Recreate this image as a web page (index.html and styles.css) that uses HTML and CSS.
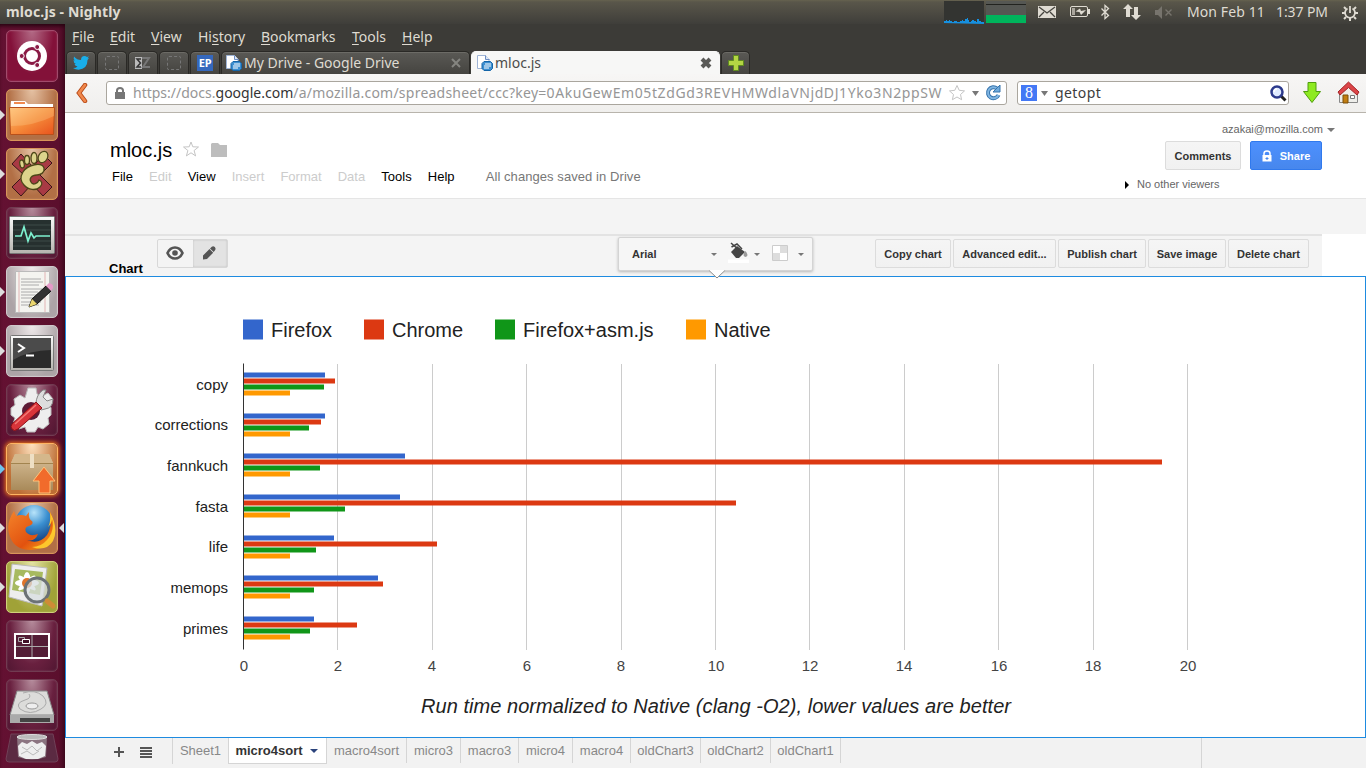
FILE: index.html
```html
<!DOCTYPE html>
<html lang="en">
<head>
<meta charset="utf-8">
<title>mloc.js</title>
<link rel="stylesheet" href="styles.css">
</head>
<body>
<svg width="0" height="0" class="defs">
  <defs>
    <linearGradient id="orange" x1="0" y1="0" x2="1" y2="1"><stop offset="0" stop-color="#ffc078"/><stop offset=".5" stop-color="#f58a3a"/><stop offset="1" stop-color="#e8521c"/></linearGradient>
    <linearGradient id="metal" x1="0" y1="0" x2="0" y2="1"><stop offset="0" stop-color="#fafafa"/><stop offset="1" stop-color="#b5b3ae"/></linearGradient>
    <linearGradient id="box" x1="0" y1="0" x2="0" y2="1"><stop offset="0" stop-color="#d9c09a"/><stop offset="1" stop-color="#a98a5a"/></linearGradient>
    <radialGradient id="globe" cx=".5" cy=".2" r=".8"><stop offset="0" stop-color="#b8e4fa"/><stop offset=".45" stop-color="#3a8fd0"/><stop offset="1" stop-color="#123c7c"/></radialGradient>
    <linearGradient id="fox" x1="0" y1="0" x2="1" y2="1"><stop offset="0" stop-color="#f4832a"/><stop offset=".6" stop-color="#e2520f"/><stop offset="1" stop-color="#f9b01e"/></linearGradient>
    <symbol id="doc" viewBox="0 0 16 16"><path d="M.5.500h8l3.500 4v9H.5z" fill="#fff" stroke="#9fb4d6"/><path d="M8.500.500v4h4" fill="#dce6f5" stroke="#6f8fc4"/><path d="M7 6.500h6.500l2 2v5l-2 2H7l-2-2v-5z" fill="#3c8fd0" stroke="#1465a8"/><path d="M8 9h6M7 11h7M7 13h5" stroke="#fff"/></symbol>
  </defs>
</svg>
<header class="panel">
  <div class="panel-title">mloc.js - Nightly</div>
  <svg class="tray" width="240" height="24" viewBox="940 0 240 24">
    <path fill="#333431" d="M944 1h40v22h-40z"/>
    <path fill="#1690e0" d="M944 23v-2h2v-1h1v1h2v-1h1v1h2v1h2v-1h3v1h3v-1h2v-1h1v1h2v-2h2v-1h1v2h1v2h2v-1h1v-1h2v1h2v1h1v-3h2v2h2v1h3v2z"/>
    <path fill="#555753" d="M986 1h40v22h-40z"/><path fill="#22231f" d="M986 4h40v1h-40z"/><path fill="#00b45c" d="M986 15h40v8h-40z"/>
    <rect x="1038" y="6" width="18" height="12" fill="#dfdbd2"/><path d="M1039 7l8 6 8-6M1039 17l5-5M1055 17l-5-5" fill="none" stroke="#45443e" stroke-width="1.300"/>
    <rect x="1070.500" y="6.500" width="17" height="10" rx="1.500" fill="none" stroke="#dfdbd2"/><path d="M1088 9h2v5h-2z" fill="#dfdbd2"/><path d="M1072 8h3v7h-3z" fill="#aaa69d"/><path d="M1075.500 11.500l4.500-3 1 2.500 5-1-5 5-1.500-3z" fill="#dfdbd2"/>
    <path d="M1101.500 8.500l7 7-3.500 3v-13l3.500 3-7 7" fill="none" stroke="#dfdbd2" stroke-width="1.300"/>
    <path d="M1128 4l5 5h-3v8h-4V9h-3zM1134 7h4v8h3l-5 5-5-5h3z" fill="#dfdbd2"/>
    <path d="M1155 10h3l4-4v13l-4-4h-3z" fill="#77746d"/><path d="M1165.500 9.500l6 6m0-6l-6 6" stroke="#77746d" stroke-width="1.400"/>
  </svg>
  <div class="clock"><span class="date">Mon Feb 11</span><span class="time">1:37 PM</span></div>
  <svg class="gear" width="18" height="18" viewBox="0 0 18 18"><path d="M6.500 4.500a5 5 0 1 0 5 0" fill="none" stroke="#dfdbd2" stroke-width="1.800"/><path d="M9 2v7" stroke="#dfdbd2" stroke-width="1.800"/><path d="M3 3l2 2M15 3l-2 2M1 9h3M14 9h3M3 15l2-2M15 15l-2-2M9 14v3" stroke="#dfdbd2" stroke-width="2"/></svg>
</header>
<div class="desktop">
<aside class="launcher">
  <div class="tile ubuntu"><svg viewBox="0 0 52 52"><circle cx="26" cy="26" r="15" fill="#fff"/><circle cx="26" cy="26" r="7.500" fill="none" stroke="#8a1a45" stroke-width="3"/><g fill="#8a1a45" stroke="#fff"><circle cx="15.700" cy="26" r="2.500"/><circle cx="31.200" cy="17" r="2.500"/><circle cx="31.200" cy="35" r="2.500"/></g></svg></div>
  <div class="tile copper run"><svg viewBox="0 0 52 52"><path d="M5 12h14l3 3h25v8H4z" fill="#fff"/><path d="M8 13h11v2H8z" fill="#f08a50"/><path d="M3.500 18.500h45l-1 27h-43z" fill="url(#orange)" stroke="#b8501a"/><path d="M4 19h44v8Q28 37 5 37z" fill="#ffe0a0" opacity=".25"/></svg></div>
  <div class="tile copper run"><svg viewBox="0 0 52 52"><path d="M6 16l9-10 12 13L37 6l9 9-12 12 12 12-9 9-11-12-11 12-9-9 12-12z" fill="#a83a44" stroke="#3a1518"/><g fill="#ddd48c" stroke="#4d4618" stroke-width="1.300"><path d="M17 24c5-8 19-10 21-4 1 5-4 7-7 7-6 0-8 4-6 7 2 4 7 1 8-2 3 1 4 4 1 7-4 4-12 3-16-2-4-4-4-8-1-13z"/><ellipse cx="16" cy="16" rx="2.200" ry="4" transform="rotate(-10 16 16)"/><ellipse cx="21" cy="12" rx="2.500" ry="4.500" /><ellipse cx="28" cy="10" rx="3" ry="5.500"/><ellipse cx="37" cy="9" rx="4.500" ry="6" transform="rotate(30 37 9)"/></g></svg></div>
  <div class="tile plum"><svg viewBox="0 0 52 52"><rect x="3.500" y="9.500" width="45" height="37" rx="1" fill="url(#metal)" stroke="#777"/><path d="M7 13h38v30H7z" fill="#26302f"/><path d="M7 18h38M7 23h38M7 34h38M7 39h38" stroke="#3d4a48"/><path d="M9 29h6l3-9 4 14 3-8 3 5 2-2h14" fill="none" stroke="#7df0cf" stroke-width="1.700"/></svg></div>
  <div class="tile silver run"><svg viewBox="0 0 52 52"><path d="M9.500 5.500h34v41h-34z" fill="#f4f4f0" stroke="#bbb"/><path d="M13 6v40M39 6v40" stroke="#e2b4b4"/><path d="M15 13h20M15 16h22M15 19h18M15 23h21M15 26h17M15 29h20M15 32h14M15 36h20M15 39h18" stroke="#999" stroke-width=".8"/><path d="M23 41l3-8 14-13 5 5-14 13z" fill="#333" stroke="#111"/><path d="M23 41l3-8 5 5z" fill="#ead66e"/><path d="M40 20l3-3q5 1 4 5l-2 3z" fill="#e59ac8"/></svg></div>
  <div class="tile silver run"><svg viewBox="0 0 52 52"><rect x="4.500" y="10.500" width="43" height="35" rx="1" fill="url(#metal)" stroke="#777"/><path d="M7 13h38v30H7z" fill="#2b2b2b"/><path d="M7 13h38v12Q24 25 7 35z" fill="#4b4b4b"/><path d="M12 19l6 4-6 4M20 30.500h8" fill="none" stroke="#fff" stroke-width="2"/></svg></div>
  <div class="tile plum"><svg viewBox="0 0 52 52"><path d="M22 4h8l1 6 5 2 6-3 5 6-4 5 2 4v7l-3 3 1 6-6 5-5-2-3 5h-8l-2-5-6 2-6-5 2-6-4-3v-7l4-3-1-6 6-4 5 3z" fill="#eee" stroke="#bbb"/><circle cx="25" cy="27" r="9" fill="#5c1a35"/><path d="M30 20q0-9 7-14l3 0-3 7 4 4 6-2q0 9-8 10l-4 1z" fill="#ddd" stroke="#888"/><path d="M6 40L30 18l6 6L12 45q-4 3-6 0-2-2 0-5z" fill="#d8343a" stroke="#8c1016"/><path d="M9 40L30 21" stroke="#f47a74" stroke-width="1.500"/></svg></div>
  <div class="tile updater run blue"><svg viewBox="0 0 52 52"><path d="M9 11h34l4 9v27H5V20z" fill="url(#box)"/><path d="M9 11h34l4 9H5z" fill="#d4b78b"/><path d="M5 20.500h42" stroke="#a2844f"/><path d="M24 11h4v14h-4z" fill="#eedfc4"/><path d="M38 24l11 14h-5v12H33V38h-6z" fill="#f16b2b" stroke="#ffc37a"/></svg></div>
  <div class="tile copper run active"><svg viewBox="0 0 52 52"><circle cx="28" cy="22" r="19" fill="url(#globe)"/><path d="M44 10q8 13 1 26-7 12-20 12Q9 48 4 35-1 22 8 9l2 5q5-2 10 0l3-4q-1 7 3 9 2 3-3 5-5 1-3 6 4 5 12 2-3 8-11 6 12 5 20-5 5-8 3-19z" fill="url(#fox)"/><path d="M44 10q1 10-2 15 4-4 4-8 3 12-5 21-6 7-15 7 14 5 21-6 6-12-3-29z" fill="#fdc72c"/></svg></div>
  <div class="tile olive run"><svg viewBox="0 0 52 52"><path d="M6 3l35 4-5 38-33-9z" fill="#eee" stroke="#bbb"/><path d="M9 8l28 3-3 23-28-5z" fill="#a7ba60"/><g fill="#fff"><ellipse cx="21" cy="22" rx="12" ry="4"/><ellipse cx="21" cy="22" rx="4" ry="11"/><ellipse cx="21" cy="22" rx="3" ry="11" transform="rotate(50 21 22)"/><ellipse cx="21" cy="22" rx="3" ry="11" transform="rotate(-50 21 22)"/></g><circle cx="21" cy="22" r="5" fill="#df742b"/><circle cx="31" cy="29" r="12" fill="#d7dde0" fill-opacity=".75" stroke="#6c7276" stroke-width="3"/><path d="M41 40l6 5" stroke="#cf8c36" stroke-width="5" stroke-linecap="round"/></svg></div>
  <div class="tile plum"><svg viewBox="0 0 52 52"><rect x="9" y="14" width="34" height="24" fill="#541d36" stroke="#fff" stroke-width="2"/><path d="M26 15v22M10 26.500h32" stroke="#aaa"/><path d="M12.500 17.500h6v4h-6z" fill="none" stroke="#aaa"/><path d="M16.500 19.500h7v4h-7z" fill="#421028" stroke="#fff"/></svg></div>
  <div class="tile plum"><svg viewBox="0 0 52 52"><path d="M11 12h30l7 24H4z" fill="#dcdcda" stroke="#888"/><path d="M4 36h44v8H4z" fill="#aaa"/><path d="M14 39h30v4H14z" fill="#444"/><path d="M17 14q12-4 20 3 7 8-2 13-11 7-21 0-5-6 5-9 7-2 4-6" fill="none" stroke="#aaa"/><ellipse cx="26" cy="27" rx="6" ry="3" fill="#eee" stroke="#999"/></svg></div>
  <div class="trash"><svg width="56" height="30" viewBox="0 0 56 30"><path d="M7 1h42l5 25q0 3-3 3H5q-3 0-3-3z" fill="#5b2a42" stroke="#704057"/><path d="M13 3h30l-1 21q-14 5-28 0z" fill="#8b7480"/><ellipse cx="28" cy="4" rx="15" ry="2.500" fill="#bbb" stroke="#ddd"/><path d="M14 13l4-4 5 2 5-3 5 3 5-2 4 4-1 10-7 3-12 0-7-3z" fill="#eee"/><path d="M18 14l5 3 5-4 5 5 5-4M17 21l6-3 6 4 6-4" fill="none" stroke="#bbb"/></svg></div>
</aside>
<main class="window">
  <nav class="menubar"><span><u>F</u>ile</span><span><u>E</u>dit</span><span><u>V</u>iew</span><span>Hi<u>s</u>tory</span><span><u>B</u>ookmarks</span><span><u>T</u>ools</span><span><u>H</u>elp</span></nav>
  <div class="tabs">
    <div class="tab app"><svg width="16" height="16" viewBox="0 0 16 16"><path d="M0 13q3 0 4.500-1.500Q2 11 1.500 9H3Q.5 8 .5 5l1.500.5Q0 3.500 1 1.500 4 5 8 5q0-4 3.500-4 1.500 0 2.500 1l2-.7-1.500 2L16 3l-1.500 2Q14.500 14 5.500 14.700 2.500 14.700 0 13z" fill="#19aeea"/></svg></div>
    <div class="tab app"><i class="blank"></i></div>
    <div class="tab app"><svg width="16" height="16" viewBox="0 0 16 16"><path d="M0 2h7v12H0z" fill="#bbb"/><path d="M6 4H2l3.500 4L2 12h4" fill="none" stroke="#333" stroke-width="1.500"/><path d="M7 3h7L8 12h7" fill="none" stroke="#777" stroke-width="2"/></svg></div>
    <div class="tab app"><i class="blank"></i></div>
    <div class="tab app"><b class="ep">EP</b></div>
    <div class="tab drive"><svg width="16" height="16"><use href="#doc"/></svg><span>My Drive - Google Drive</span><svg class="close" width="12" height="12" viewBox="0 0 12 12"><path d="M2 2l8 8m0-8l-8 8" stroke="#858580" stroke-width="2"/></svg></div>
    <div class="tab current"><svg width="16" height="16"><use href="#doc"/></svg><span>mloc.js</span><svg class="close" width="12" height="12" viewBox="0 0 12 12"><path d="M2 2l8 8m0-8l-8 8" stroke="#5a5a57" stroke-width="4"/></svg></div>
    <div class="tab plus"><svg width="16" height="16" viewBox="0 0 16 16"><path d="M5.500.5h5v5h5v5h-5v5h-5v-5h-5v-5h5z" fill="#b4d544" stroke="#5f8a20"/></svg></div>
  </div>
  <div class="navbar">
    <svg class="back" width="12" height="20" viewBox="0 0 12 20"><path d="M9 2L3 10l6 8" fill="none" stroke="#b74a18" stroke-width="4.500" stroke-linecap="round"/><path d="M9 2L3 10l6 8" fill="none" stroke="#f0884c" stroke-width="2.700" stroke-linecap="round"/></svg>
    <div class="urlbar">
      <svg width="10" height="12" viewBox="0 0 10 12"><path d="M0 5h10v7H0z" fill="#777"/><path d="M2 6V3.500q0-2.500 3-2.500t3 2.500V6" fill="none" stroke="#777" stroke-width="2"/></svg>
      <span class="url">https://docs.<b>google.com</b><span class="path">/a/mozilla.com/spreadsheet/ccc?key=</span><span class="key">0AkuGewEm05tZdGd3REVHMWdlaVNjdDJ1Yko3N2ppSW</span></span>
      <svg class="urltools" width="56" height="18" viewBox="0 0 56 18"><path d="M8 1.500l2.200 4.800 5.300.6-4 3.600 1.100 5.200L8 13l-4.600 2.700 1.100-5.200-4-3.600 5.300-.6z" fill="#fff" stroke="#c4c4c4"/><path d="M23 7h7l-3.500 5z" fill="#777"/><path d="M48 4.500A5.500 5.500 0 1 0 49.500 11" fill="none" stroke="#3674ad" stroke-width="4"/><path d="M48 4.500A5.500 5.500 0 1 0 49.500 11" fill="none" stroke="#7fb5e2" stroke-width="2"/><path d="M51 1v7h-7z" fill="#6faadb" stroke="#3674ad"/></svg>
    </div>
    <div class="search"><i class="google">8</i><svg width="7" height="5" viewBox="0 0 7 5"><path d="M0 0h7l-3.500 5z" fill="#777"/></svg><span>getopt</span><svg class="mag" width="17" height="17" viewBox="0 0 17 17"><path d="M11 11l4.500 4.500" stroke="#222" stroke-width="3"/><circle cx="7" cy="7" r="5.500" fill="#dfeaff" stroke="#2c3a8c" stroke-width="2.500"/><path d="M4 7q0-3 3-3" stroke="#fff" stroke-width="1.500" fill="none"/></svg></div>
    <svg class="download" width="20" height="24" viewBox="0 0 20 24"><path d="M6 1.500h8v9h4.500L10 21.500 1.500 10.500H6z" fill="#8eea20" stroke="#4f9e0d"/></svg>
    <svg class="home" width="24" height="24" viewBox="0 0 24 24"><path d="M3.500 11v10.500h18V11l-9-7z" fill="#eeeeea" stroke="#888"/><path d="M7 14h5v8H7z" fill="#c17d11" stroke="#7b4f08"/><path d="M14.500 14.500h4v3h-4z" fill="#fff" stroke="#777"/><path d="M12.500 1l10.500 10-2 3-8.500-7.500L4 14l-2-3z" fill="#dc4548" stroke="#a32427"/></svg>
  </div>
  <section class="page">
    <div class="dochead">
      <div class="docleft">
        <div class="doctitle"><span>mloc.js</span><svg class="star" width="16" height="16" viewBox="0 0 16 16"><path d="M8 1l1.800 4.800 5.700.2-4.400 3.500 1.500 5.400L8 11.800l-4.600 3.100 1.500-5.400L.5 6l5.700-.2z" fill="none" stroke="#c4c4c4"/></svg><svg width="16" height="14" viewBox="0 0 16 14"><path d="M1 0h6l2 2h7v12H0V1z" fill="#bdbdbd"/></svg></div>
        <div class="docmenu"><span>File</span><span class="off">Edit</span><span>View</span><span class="off">Insert</span><span class="off">Format</span><span class="off">Data</span><span>Tools</span><span>Help</span><span class="saved">All changes saved in Drive</span></div>
      </div>
      <div class="docright">
        <div class="account">azakai@mozilla.com<i class="down"></i></div>
        <div class="actions"><span class="btn comments">Comments</span><span class="btn share"><svg width="10" height="12" viewBox="0 0 10 12"><path d="M.5 5h9v6.500h-9z" fill="#fff"/><path d="M2 5V3.500Q2 1 5 1t3 2.500V5" fill="none" stroke="#fff" stroke-width="1.500"/><path d="M5 7v3M3.500 8.500h3" stroke="#4787ed"/></svg>Share</span></div>
        <div class="viewers"><i class="right"></i>No other viewers</div>
      </div>
    </div>
    <div class="band"></div>
    <div class="chartbar">
      <strong>Chart</strong>
      <div class="modes"><span><svg width="18" height="14" viewBox="0 0 18 14"><path d="M1.500 7q2.500-5.500 7.500-5.500T16.500 7q-2.500 5.500-7.500 5.500T1.500 7z" fill="none" stroke="#555" stroke-width="2.600"/><circle cx="9" cy="7" r="2.800" fill="#555"/></svg></span><span class="on"><svg width="14" height="14" viewBox="0 0 14 14"><path d="M1 13.500v-4L7.500 3l3.700 3.700L5 13l-4 .5zM8 2.500l1.800-1.800q1.500-1 3 .3 1.300 1.500.4 3l-1.500 2z" fill="#555"/></svg></span></div>
      <div class="chartactions"><span class="btn b1">Copy chart</span><span class="btn b2">Advanced edit...</span><span class="btn b3">Publish chart</span><span class="btn b4">Save image</span><span class="btn b5">Delete chart</span></div>
      <div class="pop">
        <span>Arial</span><i class="down d1"></i>
        <svg class="bucket" width="22" height="22" viewBox="0 0 22 22"><path d="M3 10l6-6 8 6-6 6H8z" fill="#444"/><path d="M3 1l8 7M3.500 5L9 2l5 5" fill="none" stroke="#444" stroke-width="1.500"/><path d="M17.500 9q-4 5 0 6 4-1 0-6z" fill="#999"/><path d="M0 17.500h21v3.500H0z" fill="#fff"/></svg><i class="down d2"></i>
        <svg class="checker" width="16" height="16" viewBox="0 0 16 16"><path d="M.5.5h15v15H.5z" fill="#fff" stroke="#ccc"/><path d="M8 8h7v7H8zM1 1h7v7H1z" fill="#fff"/><path d="M8 1h7v7H8zM1 8h7v7H1z" fill="#ddd"/></svg><i class="down d3"></i>
        <svg class="tip" width="18" height="9" viewBox="0 0 18 9"><path d="M0 0l9 8.500L18 0z" fill="#fff"/><path d="M.5 0L9 8l8.500-8" fill="none" stroke="#888"/></svg>
      </div>
    </div>
    <div class="chart">
      <svg width="1299" height="460" viewBox="66 277 1299 460">
        <path d="M337.500 364v286M432.500 364v286M526.500 364v286M621.500 364v286M715.500 364v286M809.500 364v286M904.500 364v286M998.500 364v286M1093.500 364v286M1187.500 364v286" stroke="#ccc"/>
        <g class="firefox"><rect x="243" y="319.500" width="20" height="20"/><rect x="243" y="372.500" width="82" height="5"/><rect x="243" y="413.500" width="82" height="5"/><rect x="243" y="453.500" width="162" height="5"/><rect x="243" y="494.500" width="157" height="5"/><rect x="243" y="535.500" width="91" height="5"/><rect x="243" y="575.500" width="135" height="5"/><rect x="243" y="616.500" width="71" height="5"/></g>
        <g class="chrome"><rect x="364" y="319.500" width="20" height="20"/><rect x="243" y="378.500" width="92" height="5"/><rect x="243" y="419.500" width="78" height="5"/><rect x="243" y="459.500" width="919" height="5"/><rect x="243" y="500.500" width="493" height="5"/><rect x="243" y="541.500" width="194" height="5"/><rect x="243" y="581.500" width="140" height="5"/><rect x="243" y="622.500" width="114" height="5"/></g>
        <g class="asmjs"><rect x="495" y="319.500" width="20" height="20"/><rect x="243" y="384.500" width="81" height="5"/><rect x="243" y="425.500" width="66" height="5"/><rect x="243" y="465.500" width="77" height="5"/><rect x="243" y="506.500" width="102" height="5"/><rect x="243" y="547.500" width="73" height="5"/><rect x="243" y="587.500" width="71" height="5"/><rect x="243" y="628.500" width="67" height="5"/></g>
        <g class="native"><rect x="686" y="319.500" width="20" height="20"/><rect x="243" y="390.500" width="47" height="5"/><rect x="243" y="431.500" width="47" height="5"/><rect x="243" y="471.500" width="47" height="5"/><rect x="243" y="512.500" width="47" height="5"/><rect x="243" y="553.500" width="47" height="5"/><rect x="243" y="593.500" width="47" height="5"/><rect x="243" y="634.500" width="47" height="5"/></g>
        <path d="M243.500 363.500v286" stroke="#333"/>
        <g class="legend"><text x="271" y="337">Firefox</text><text x="392" y="337">Chrome</text><text x="523" y="337">Firefox+asm.js</text><text x="714" y="337">Native</text></g>
        <g class="names"><text x="228" y="390">copy</text><text x="228" y="430">corrections</text><text x="228" y="471">fannkuch</text><text x="228" y="512">fasta</text><text x="228" y="552">life</text><text x="228" y="593">memops</text><text x="228" y="634">primes</text></g>
        <g class="ticks"><text x="244" y="671">0</text><text x="338" y="671">2</text><text x="432" y="671">4</text><text x="527" y="671">6</text><text x="621" y="671">8</text><text x="716" y="671">10</text><text x="810" y="671">12</text><text x="904" y="671">14</text><text x="999" y="671">16</text><text x="1093" y="671">18</text><text x="1188" y="671">20</text></g>
        <text class="caption" x="716" y="713" textLength="590">Run time normalized to Native (clang -O2), lower values are better</text>
      </svg>
    </div>
    <footer class="sheets">
      <svg class="sheettools" width="44" height="30" viewBox="0 0 44 30"><path d="M5 14h10M10 9v10" stroke="#555" stroke-width="2"/><path d="M31 10h12M31 13h12M31 16h12M31 19h12" stroke="#555" stroke-width="2"/></svg>
      <div class="sheetlist"><span class="s49">Sheet1</span><span class="s98 sel">micro4sort<i></i></span><span class="s80">macro4sort</span><span class="s54">micro3</span><span class="s58">macro3</span><span class="s54">micro4</span><span class="s58">macro4</span><span class="s70">oldChart3</span><span class="s70">oldChart2</span><span class="s70">oldChart1</span></div>
      <div class="sheetend"></div>
    </footer>
  </section>
</main>
</div>
</body>
</html>
```

FILE: styles.css
```css
* { box-sizing: border-box; }
body { margin: 0; width: 1366px; height: 768px; overflow: hidden; background: #3c3b37; font-family: "Liberation Sans", Arial, sans-serif; white-space: nowrap; }
svg { display: block; flex: none; }
.defs { position: absolute; }
i { font-style: normal; }

.panel { height: 24px; display: flex; align-items: center; background: linear-gradient(#66624f 0, #59564a 2px, #3f3e3a); color: #dfdbd2; font: 14.500px/24px "Noto Sans", sans-serif; }
.panel-title { padding-left: 6px; width: 940px; font-weight: 700; font-size: 14px; letter-spacing: .13px; }
.clock { width: 161px; flex: none; padding-left: 7px; display: flex; font-size: 14px; }
.date { width: 89px; flex: none; letter-spacing: .1px; }
.time { letter-spacing: -.1px; }
.gear { margin-top: 1px; }

.desktop { display: flex; height: 744px; }
.launcher { width: 65px; flex: none; padding: 6px 0 0 6px; display: flex; flex-direction: column; gap: 7px; background: linear-gradient(90deg, #641132, #5b0f2d 90%, #430920); box-shadow: inset 0 4px 4px -2px #23030f; }
.tile { position: relative; width: 52px; height: 52px; flex: none; border-radius: 5px; border: 1px solid rgba(255,255,255,.3); box-shadow: inset 0 0 2px rgba(255,255,255,.2); }
.tile svg { width: 52px; height: 52px; margin: -1px; }
.ubuntu { background: radial-gradient(ellipse at 50% 0, #b36b86, #831139 60%) border-box; border-color: #a14b6c; }
.copper { background: radial-gradient(ellipse at 50% 0, #e5c2a4, #b26f45 65%) border-box; border-color: #d99559; }
.plum { background: radial-gradient(ellipse at 50% 0, #b68d9d, #69203f 60%, #4e1530) border-box; border-color: #713b51; }
.silver { background: radial-gradient(ellipse at 50% 0, #eee9ea, #aca3a6 75%) border-box; border-color: #cfc8cb; }
.updater { background: radial-gradient(ellipse at 50% 0, #ffe3c0, #bd6e35 75%) border-box; border-color: #ffb462; box-shadow: 0 0 4px 1px #f07819; }
.olive { background: radial-gradient(ellipse at 50% 0, #e4e3a4, #a0a237 70%) border-box; border-color: #d1d179; }
.run::before { content: ""; position: absolute; left: -7px; top: 20px; border: 5px solid transparent; border-left-color: #ddd; border-right: 0; }
.blue::before { border-left-color: #6fc4ec; }
.active::after { content: ""; position: absolute; right: -7px; top: 20px; border: 5px solid transparent; border-right-color: #ddd; border-left: 0; }
.trash { margin: -5px 0 0 -2px; }

.window { width: 1301px; }
.menubar { height: 26px; padding-left: 7px; display: grid; grid-template-columns: 38px 41px 47px 63px 91px 50px 50px; background: #3c3b37; color: #dfdbd2; font: 14px/26px "Noto Sans", sans-serif; }
.menubar u { text-underline-offset: 2px; }
.tabs { height: 24px; padding: 1px 0 0 1px; display: flex; gap: 1px; background: #3c3b37; }
.tab { height: 23px; display: flex; align-items: center; border: 1px solid #2a2926; border-bottom: 0; border-radius: 5px 5px 0 0; background: linear-gradient(#5a5955, #454440); box-shadow: inset 0 1px #6c6b66; color: #dfdbd2; font: 14px/22px "Noto Sans", sans-serif; }
.app { width: 30px; justify-content: center; }
.drive { width: 249px; padding-left: 4px; }
.drive span, .current span { margin-left: 2px; flex: 1; }
.current { width: 249px; padding-left: 5px; background: #f7f7f6; color: #4c4c4c; box-shadow: none; border-color: #f7f7f6; }
.close { margin-right: 7px; }
.plus { width: 29px; justify-content: center; }
.blank { width: 14px; height: 14px; border: 1px dashed #777; border-radius: 2px; }
.ep { width: 16px; height: 16px; background: #3568bd; color: #fff; font: 700 11px/16px "Noto Sans", sans-serif; text-align: center; letter-spacing: -.3px; }
.navbar { height: 39px; padding-left: 11px; display: flex; align-items: center; background: linear-gradient(#f7f6f5, #f0efed); border-bottom: 1px solid #b8b4ac; font: 14px/22px "Noto Sans", sans-serif; color: #3c3c3c; }
.back { margin-right: 18px; }
.urlbar { width: 901px; height: 24px; display: flex; align-items: center; padding-left: 8px; border: 1px solid #aaa69e; border-radius: 3px; background: #fff; }
.url { width: 816px; margin-left: 8px; overflow: hidden; color: #969696; }
.url b { color: #333; font-weight: 400; }
.path { letter-spacing: .23px; }
.key { letter-spacing: .6px; }
.search { width: 272px; height: 24px; margin-left: 10px; display: flex; align-items: center; padding-left: 3px; border: 1px solid #aaa69e; border-radius: 3px; background: #fff; }
.google { width: 16px; height: 16px; margin-right: 4px; background: #4378f5; color: #fff; font: 16px/15px "Liberation Serif", serif; text-align: center; }
.search span { margin-left: 7px; flex: 1; letter-spacing: .4px; }
.mag { margin-right: 1px; }
.download { margin-left: 13px; }
.home { margin-left: 14px; }

.page { height: 655px; background: #fff; }
.dochead { height: 86px; display: flex; justify-content: space-between; border-bottom: 1px solid #e5e5e5; }
.docleft { padding: 26px 0 0 45px; }
.doctitle { height: 22px; display: flex; align-items: center; font-size: 20px; line-height: 22px; }
.star { margin: -2px 12px 0 11px; }
.docmenu { display: flex; gap: 16.150px; margin: 8px 0 0 2px; font-size: 13px; line-height: 16px; color: #000; }
.docmenu .off { color: #ccc; }
.docmenu .saved { margin-left: 15px; color: #777; letter-spacing: .07px; }
.docright { width: 257px; padding-top: 10px; font-size: 11px; color: #666; }
.account { display: flex; align-items: center; padding-left: 113px; line-height: 13px; }
.down { width: 0; border: 4px solid transparent; border-top-color: #777; border-bottom: 0; }
.account .down { margin-left: 4px; }
.actions { display: flex; gap: 9px; margin: 5px 0 0 56px; }
.btn { height: 29px; display: flex; align-items: center; justify-content: center; border: 1px solid #dcdcdc; border-radius: 2px; background: linear-gradient(#f5f5f5, #f1f1f1); color: #333; font-size: 11px; font-weight: 700; }
.comments { width: 76px; }
.share { width: 72px; gap: 8px; border-color: #3079ed; background: linear-gradient(#4d90fe, #4787ed); color: #fff; }
.viewers { display: flex; align-items: center; margin: 8px 0 0 16px; line-height: 13px; }
.right { border: 4px solid transparent; border-left-color: #000; border-right: 0; margin-right: 8px; }
.band { height: 35px; background: #f4f4f4; }
.chartbar { position: relative; width: 1257px; height: 42px; display: flex; border-top: 2px solid #e3e3e3; padding: 3px 0 0 44px; background: #f4f4f4; }
.chartbar strong { width: 48px; padding-top: 22px; font-size: 13px; line-height: 16px; }
.modes { width: 71px; height: 29px; display: flex; border: 1px solid #d8d8d8; border-radius: 2px; }
.modes span { width: 35px; display: flex; align-items: center; justify-content: center; }
.modes .on { background: #e3e3e3; box-shadow: inset 0 0 2px #bbb; }
.modes svg { margin: -2px 0 0 -1px; }
.chartactions { display: flex; gap: 2px; margin-left: 647px; }
.b1 { width: 76px; }
.b2 { width: 103px; }
.b3 { width: 88px; }
.b4 { width: 78px; }
.b5 { width: 81px; }
.pop { position: absolute; z-index: 2; left: 553px; top: 1px; width: 195px; height: 34px; display: flex; align-items: center; padding-left: 13px; border: 1px solid #d4d4d4; border-radius: 2px; background: #f6f6f6; box-shadow: 0 1px 3px rgba(0,0,0,.25); font-size: 11px; font-weight: 700; color: #333; }
.pop .down { border-width: 3px; border-bottom: 0; }
.pop span { width: 79px; }
.bucket { margin: -2px 4px 0 11px; }
.checker { margin: -2px 10px 0 12px; }
.tip { position: absolute; left: 89px; top: 32px; }
.chart { height: 462px; border: 1px solid #1e8be0; }
.firefox { fill: #3366cc; }
.chrome { fill: #dc3912; }
.asmjs { fill: #109618; }
.native { fill: #ff9900; }
.legend { font-size: 20px; fill: #222; }
.names { font-size: 15px; fill: #222; text-anchor: end; }
.ticks { font-size: 15px; fill: #444; text-anchor: middle; }
.caption { font-size: 20px; font-style: italic; fill: #222; text-anchor: middle; }
.sheets { height: 30px; display: flex; background: #f2f2f2; padding-left: 44px; }
.sheetlist { width: 1029px; height: 26px; display: flex; margin-left: 19px; border-left: 1px solid #d5d5d5; font-size: 13px; line-height: 25px; color: #888; }
.sheetlist span { display: flex; align-items: center; justify-content: center; height: 25px; border-right: 1px solid #d5d5d5; }
.sheetlist .sel { background: #fff; color: #333; font-weight: 700; border: 1px solid #d5d5d5; border-top: 0; height: 26px; padding-right: 2px; }
.sheetlist i { margin-left: 7px; border: 4px solid transparent; border-top-color: #2b437c; border-bottom: 0; }
.sheetlist .s49 { width: 55px; border-right: 0; }
.s98 { width: 99px; }
.s80 { width: 80px; }
.s54 { width: 54px; }
.s58 { width: 58px; }
.s70 { width: 70px; }
.sheetend { width: 1px; background: #d5d5d5; }
```
